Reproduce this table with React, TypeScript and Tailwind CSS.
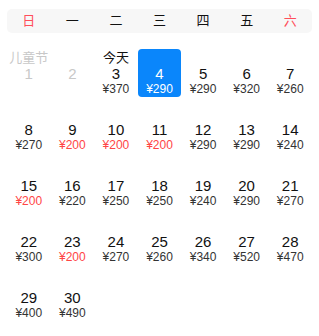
import { FC } from "react";

type Day = {
  date: number;
  price?: number;
  label?: string;
  disabled?: boolean;
};

const WEEK = ["日", "一", "二", "三", "四", "五", "六"];

const PRICES: Record<number, number> = {
  3: 370, 4: 290, 5: 290, 6: 320, 7: 260,
  8: 270, 9: 200, 10: 200, 11: 200, 12: 290, 13: 290, 14: 240,
  15: 200, 16: 220, 17: 250, 18: 250, 19: 240, 20: 290, 21: 270,
  22: 300, 23: 200, 24: 270, 25: 260, 26: 340, 27: 520, 28: 470,
  29: 400, 30: 490,
};

const TODAY = 3;
const SELECTED = 4;
const LOWEST = 200;

const days: Day[] = Array.from({ length: 30 }, (_, i) => {
  const date = i + 1;
  return {
    date,
    price: PRICES[date],
    label: date === 1 ? "儿童节" : date === TODAY ? "今天" : undefined,
    disabled: date < TODAY,
  };
});

const DayCell: FC<{ day: Day }> = ({ day }) => {
  const active = day.date === SELECTED;
  const cheap = day.price === LOWEST;

  return (
    <div
      className={`flex h-12 flex-col items-center pt-[1px] rounded-[4px] ${
        active ? "bg-[#0a86fb] text-white" : day.disabled ? "text-[#c8c8c8]" : "text-[#111]"
      }`}
    >
      <span className="h-[15px] text-[13px] leading-[15px]">{day.label}</span>
      <span className="text-[15px] leading-[17px]">{day.date}</span>
      {day.price && (
        <span
          className={`text-[12px] leading-[14px] ${
            active ? "text-white" : cheap ? "text-[#ff4545]" : "text-[#333]"
          }`}
        >
          ¥{day.price}
        </span>
      )}
    </div>
  );
};

export default function App() {
  return (
    <div
      className="w-[319px] h-[336px] bg-white px-[7px] pt-[9px]"
      style={{ fontFamily: '"Liberation Sans", "Noto Sans CJK SC", sans-serif' }}
    >
      <div className="grid h-6 grid-cols-7 items-center rounded-[5px] bg-[#f7f7f7] text-[13px]">
        {WEEK.map((w, i) => (
          <span
            key={w}
            className={`text-center ${i === 0 || i === 6 ? "text-[#ff4d5a]" : "text-[#111]"}`}
          >
            {w}
          </span>
        ))}
      </div>
      <div className="mt-4 grid grid-cols-7 gap-y-2">
        {days.map((d) => (
          <DayCell key={d.date} day={d} />
        ))}
      </div>
    </div>
  );
}
